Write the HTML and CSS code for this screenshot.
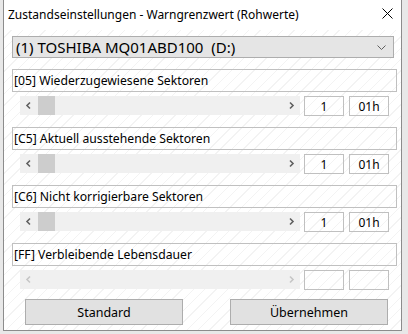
FILE: index.html
```html
<!DOCTYPE html>
<html lang="de">
<head>
    <meta charset="UTF-8">
    <link rel="stylesheet" href="styles.css">
    <title>Zustandseinstellungen</title>
</head>
<body>
<div class="window">
    <div class="titleBar">
        <span class="title">Zustandseinstellungen - Warngrenzwert (Rohwerte)</span>
        <svg class="closeIcon" width="11" height="11" viewBox="0 0 11 11">
            <path d="M0.5 0.5 L10.5 10.5 M10.5 0.5 L0.5 10.5" stroke="#000" stroke-width="1"/>
        </svg>
    </div>
    <div class="content">
        <div class="driveSelect">
            <span>(1) TOSHIBA MQ01ABD100&nbsp; (D:)</span>
            <svg width="9" height="5" viewBox="0 0 9 5">
                <path d="M0.5 0.5 L4.5 4.5 L8.5 0.5" fill="none" stroke="#606060" stroke-width="1"/>
            </svg>
        </div>

        <div class="attrRow">
            <div class="attrLabel">[05] Wiederzugewiesene Sektoren</div>
            <div class="attrControls">
                <div class="scrollBar">
                    <svg class="arrow" width="18" height="19" viewBox="0 0 18 19"><path d="M10 6.5 L7 9.5 L10 12.5" fill="none" stroke-width="1.6"/></svg>
                    <span class="thumb"></span>
                    <svg class="arrow arrowRight" width="18" height="19" viewBox="0 0 18 19"><path d="M8 6.5 L11 9.5 L8 12.5" fill="none" stroke-width="1.6"/></svg>
                </div>
                <div class="valueBox">1</div>
                <div class="valueBox">01h</div>
            </div>
        </div>

        <div class="attrRow">
            <div class="attrLabel">[C5] Aktuell ausstehende Sektoren</div>
            <div class="attrControls">
                <div class="scrollBar">
                    <svg class="arrow" width="18" height="19" viewBox="0 0 18 19"><path d="M10 6.5 L7 9.5 L10 12.5" fill="none" stroke-width="1.6"/></svg>
                    <span class="thumb"></span>
                    <svg class="arrow arrowRight" width="18" height="19" viewBox="0 0 18 19"><path d="M8 6.5 L11 9.5 L8 12.5" fill="none" stroke-width="1.6"/></svg>
                </div>
                <div class="valueBox">1</div>
                <div class="valueBox">01h</div>
            </div>
        </div>

        <div class="attrRow">
            <div class="attrLabel">[C6] Nicht korrigierbare Sektoren</div>
            <div class="attrControls">
                <div class="scrollBar">
                    <svg class="arrow" width="18" height="19" viewBox="0 0 18 19"><path d="M10 6.5 L7 9.5 L10 12.5" fill="none" stroke-width="1.6"/></svg>
                    <span class="thumb"></span>
                    <svg class="arrow arrowRight" width="18" height="19" viewBox="0 0 18 19"><path d="M8 6.5 L11 9.5 L8 12.5" fill="none" stroke-width="1.6"/></svg>
                </div>
                <div class="valueBox">1</div>
                <div class="valueBox">01h</div>
            </div>
        </div>

        <div class="attrRow">
            <div class="attrLabel">[FF] Verbleibende Lebensdauer</div>
            <div class="attrControls">
                <div class="scrollBar disabled">
                    <svg class="arrow" width="18" height="19" viewBox="0 0 18 19"><path d="M10 6.5 L7 9.5 L10 12.5" fill="none" stroke-width="1.6"/></svg>
                    <svg class="arrow arrowRight" width="18" height="19" viewBox="0 0 18 19"><path d="M8 6.5 L11 9.5 L8 12.5" fill="none" stroke-width="1.6"/></svg>
                </div>
                <div class="valueBox"></div>
                <div class="valueBox"></div>
            </div>
        </div>

        <div class="buttonRow">
            <button class="dlgButton">Standard</button>
            <button class="dlgButton">Übernehmen</button>
        </div>
    </div>
</div>
</body>
</html>
```

FILE: styles.css
```css
body {
    margin: 0;
    width: 408px;
    height: 334px;
    overflow: hidden;
    background: #e8e8e8;
    font-family: "Noto Sans", sans-serif;
}

.window {
    margin-left: 3px;
    width: 397px;
    height: 330px;
    border: 1px solid #8c8c8c;
    border-top: none;
    background-color: #ffffff;
    background-image: repeating-linear-gradient(-45deg, #ffffff 0px, #ffffff 7px, #f3f3f3 7px, #f3f3f3 8px);
}

.titleBar {
    height: 30px;
    display: flex;
    align-items: center;
    justify-content: space-between;
    padding: 0 8px 0 4px;
    background: #ffffff;
}

.title {
    font-size: 12px;
    color: #000;
    margin-top: -2px;
}

.closeIcon {
    margin-top: -4px;
}

.content {
    padding: 6px 4px 0 8px;
}

.driveSelect {
    width: 370px;
    height: 20px;
    border: 1px solid #adadad;
    background: #e5e5e5;
    display: flex;
    align-items: center;
    justify-content: space-between;
    padding: 0 7px 0 3px;
    font-size: 15px;
    color: #000;
}

.attrRow {
    margin-top: 11px;
}

.attrRow:first-of-type {
    margin-top: 12px;
}

.attrLabel {
    height: 21px;
    border: 1px solid #c0c0c0;
    font-size: 12.2px;
    line-height: 22px;
    padding-left: 1px;
    color: #000;
}

.attrControls {
    display: flex;
    gap: 4px;
    margin-top: 4px;
    padding-left: 8px;
}

.scrollBar {
    width: 280px;
    height: 19px;
    background: #f0f0f0;
    display: flex;
    align-items: center;
}

.arrow {
    stroke: #606060;
}

.arrowRight {
    margin-left: auto;
}

.disabled .arrow {
    stroke: #c6c6c6;
}

.thumb {
    width: 17px;
    height: 19px;
    background: #cdcdcd;
}

.valueBox {
    width: 38px;
    height: 18px;
    border: 1px solid #c0c0c0;
    text-align: center;
    font-size: 12px;
    line-height: 19px;
    color: #000;
}

.valueBox + .valueBox {
    margin-left: 1px;
}

.buttonRow {
    display: flex;
    justify-content: space-between;
    padding: 0 9px 0 13px;
    margin-top: 9px;
}

.dlgButton {
    width: 158px;
    height: 26px;
    border: 1px solid #adadad;
    background: #e1e1e1;
    font-family: "Noto Sans", sans-serif;
    font-size: 12.5px;
    color: #000;
    padding: 0;
}
```
